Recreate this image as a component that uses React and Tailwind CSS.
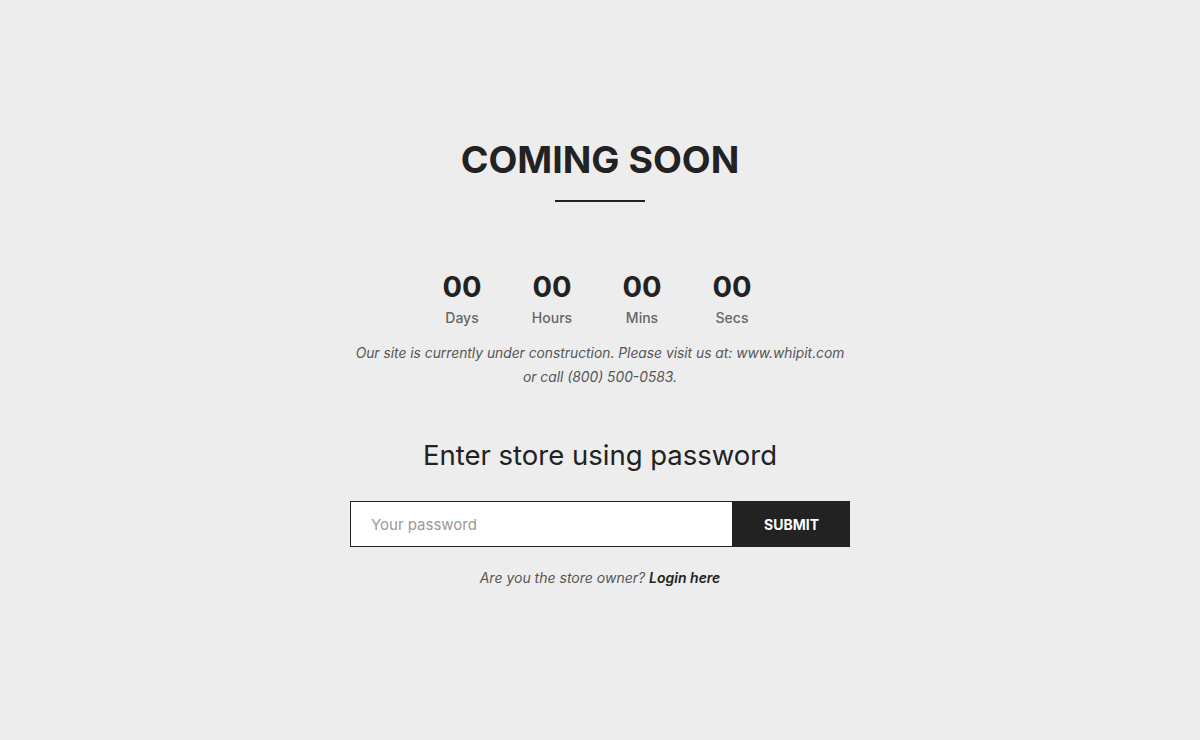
export default function App() {
  const units = [
    ['00', 'Days'],
    ['00', 'Hours'],
    ['00', 'Mins'],
    ['00', 'Secs'],
  ];

  return (
    <div className="min-h-[740px] w-full bg-[#ededed] text-[#222] font-['Inter','Liberation_Sans',sans-serif] flex flex-col items-center pt-[136px]">
      <h1 className="text-[37.5px] leading-[48px] font-bold text-[#222]">COMING SOON</h1>
      <div className="mt-[16px] w-[90px] h-[2px] bg-[#222]" />

      <div className="mt-[68px] mr-[6px] flex">
        {units.map(([num, label]) => (
          <div key={label} className="w-[90px] flex flex-col items-center">
            <span className="text-[29px] leading-[34px] font-bold text-[#222]">{num}</span>
            <span className="mt-[4px] text-[14px] leading-[20px] font-medium text-[#666]">{label}</span>
          </div>
        ))}
      </div>

      <p className="mt-[13px] w-[500px] text-center text-[13.8px] leading-[24px] italic text-[#555]">
        Our site is currently under construction. Please visit us at: www.whipit.com or call (800) 500-0583.
      </p>

      <h2 className="mt-[49px] text-[27.5px] leading-[34px] font-normal text-[#222]">Enter store using password</h2>

      <form className="mt-[29px] flex w-[500px] h-[46px]" onSubmit={e => e.preventDefault()}>
        <input
          type="password"
          placeholder="Your password"
          className="flex-1 h-full bg-white border border-[#222] px-[20px] text-[15px] text-[#222] placeholder:text-[#999] outline-none"
        />
        <button type="submit" className="w-[117px] h-full bg-[#222] text-white text-[14px] font-bold">
          SUBMIT
        </button>
      </form>

      <p className="mt-[21px] text-[14px] leading-[20px] italic text-[#555]">
        Are you the store owner? <a href="#" className="font-semibold text-[#222]">Login here</a>
      </p>
    </div>
  );
}
